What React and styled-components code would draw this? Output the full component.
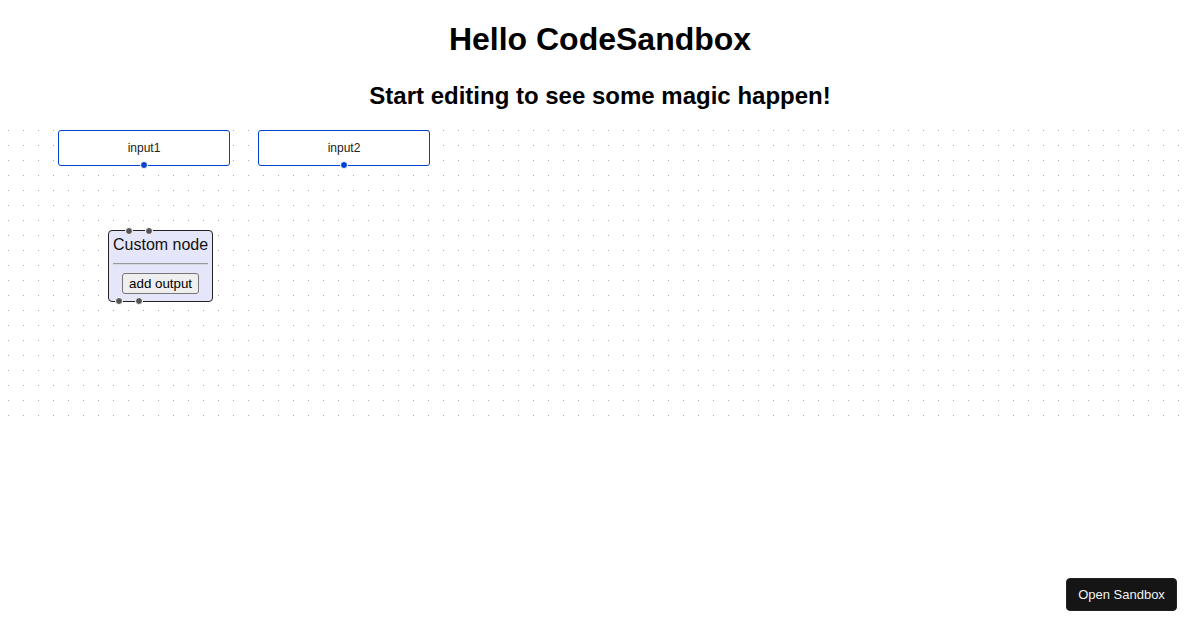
import React from "react";
import styled, { createGlobalStyle } from "styled-components";

const GlobalStyle = createGlobalStyle`
  body {
    margin: 0 8px;
    background: #ffffff;
    font-family: "Liberation Sans", Arial, sans-serif;
  }
`;

const AppWrap = styled.div`
  font-family: "Liberation Sans", Arial, sans-serif;
  text-align: center;
  padding-top: 0.1px;
`;

const Title = styled.h1`
  font-size: 32px;
  margin: 21.3px 0 0;
  color: #000;
`;

const Subtitle = styled.h2`
  font-size: 24px;
  margin: 24px 0 16.4px;
  color: #000;
`;

const Canvas = styled.div`
  position: relative;
  width: 100%;
  height: 300px;
  overflow: hidden;
  background-color: #fff;
  background-image: radial-gradient(circle, #a9a9b0 0.75px, transparent 1px);
  background-size: 15px 15px;
  background-position: -7px -4px;
  text-align: left;
`;

const InputNode = styled.div`
  position: absolute;
  left: ${(p) => p.x}px;
  top: ${(p) => p.y}px;
  width: 150px;
  padding: 10px;
  border: 1px solid #0041d0;
  border-radius: 3px;
  background: #fff;
  color: #222;
  font-size: 12px;
  line-height: 14px;
  text-align: center;
`;

const Handle = styled.span`
  position: absolute;
  width: 6px;
  height: 6px;
  border-radius: 50%;
  border: 1px solid #fff;
  box-sizing: content-box;
  background: ${(p) => p.color || "#555"};
  left: ${(p) => p.left};
  ${(p) => (p.side === "top" ? "top: -4px;" : "bottom: -4px;")}
  transform: translateX(-50%);
`;

const CustomNode = styled.div`
  position: absolute;
  left: ${(p) => p.x}px;
  top: ${(p) => p.y}px;
  padding: 5px 4px;
  border: 1px solid #222;
  border-radius: 4px;
  background: #e6e6fa;
  text-align: center;
`;

const NodeLabel = styled.div`
  font-size: 16px;
  line-height: 18px;
  color: #111;
`;

const Divider = styled.hr`
  margin: 9px 0 8px;
  border: none;
  border-top: 1px solid #9a9a9a;
  border-bottom: 1px solid #d8d8e0;
`;

const AddButton = styled.button`
  font-family: "Liberation Sans", Arial, sans-serif;
  font-size: 13.33px;
  padding: 2px 6px;
  margin-bottom: 2px;
  background: #efefef;
  border: 1px solid #767676;
  border-radius: 3px;
  color: #000;
`;

const SandboxButton = styled.button`
  position: fixed;
  right: 23px;
  bottom: 19px;
  width: 111px;
  height: 33px;
  background: #151515;
  color: #f2f2f2;
  border: 1px solid #222;
  border-radius: 4px;
  font-family: "Liberation Sans", Arial, sans-serif;
  font-size: 13px;
`;

export default function App() {
  return (
    <AppWrap>
      <GlobalStyle />
      <Title>Hello CodeSandbox</Title>
      <Subtitle>Start editing to see some magic happen!</Subtitle>
      <Canvas>
        <InputNode x={50} y={3}>
          input1
          <Handle side="bottom" left="50%" color="#0041d0" />
        </InputNode>
        <InputNode x={250} y={3}>
          input2
          <Handle side="bottom" left="50%" color="#0041d0" />
        </InputNode>
        <CustomNode x={100} y={103}>
          <Handle side="top" left="20px" />
          <Handle side="top" left="40px" />
          <NodeLabel>Custom node</NodeLabel>
          <Divider />
          <AddButton>add output</AddButton>
          <Handle side="bottom" left="10px" />
          <Handle side="bottom" left="30px" />
        </CustomNode>
      </Canvas>
      <SandboxButton>Open Sandbox</SandboxButton>
    </AppWrap>
  );
}
